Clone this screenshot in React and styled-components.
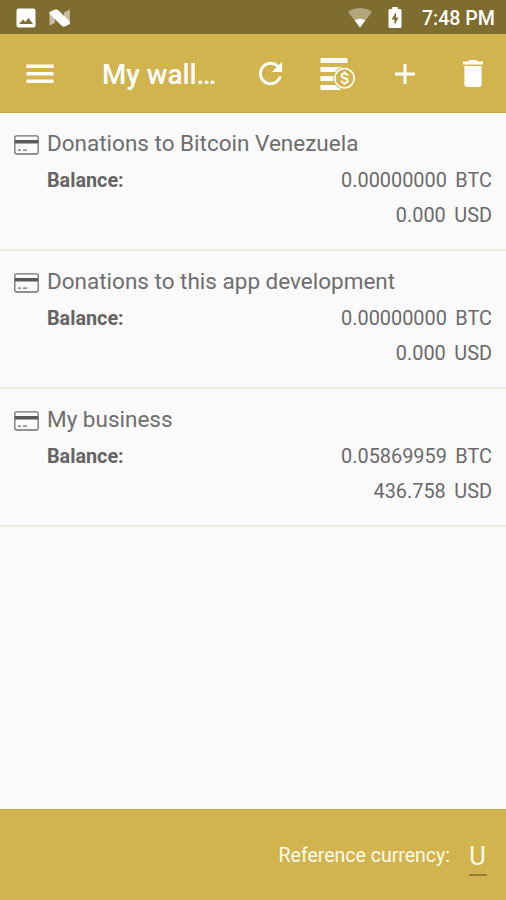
import React from 'react';
import styled, {createGlobalStyle} from 'styled-components';

const GlobalStyle = createGlobalStyle`
  body {
    margin: 0;
    background-color: #fafafa;
    font-family: Roboto, sans-serif;
  }
`;

const Screen = styled.div`
  display: flex;
  flex-direction: column;
  height: 900px;
  overflow: hidden;
`;

const StatusBar = styled.div`
  display: flex;
  justify-content: space-between;
  align-items: center;
  height: 34px;
  padding: 1px 11px 0 16px;
  box-sizing: border-box;
  background-color: #7f6c2f;
  color: white;
`;

const StatusGroup = styled.div`
  display: flex;
  align-items: center;
  gap: ${props => props.$gap}px;
`;

const Clock = styled.span`
  margin-left: 4px;
  padding-top: 2px;
  font-size: 19.6px;
  font-weight: 500;
  line-height: 24px;
`;

const Toolbar = styled.header`
  display: flex;
  align-items: center;
  height: 79px;
  padding: 1px 20px 0 26px;
  box-sizing: border-box;
  background-color: #d2b44e;
  border-bottom: 1px solid #c9a936;
  color: white;
`;

const Title = styled.h1`
  flex: 1;
  margin: 2px 0 0 48px;
  font-size: 27.8px;
  font-weight: 500;
  line-height: 36px;
  white-space: nowrap;
`;

const IconButton = styled.button`
  display: flex;
  align-items: center;
  justify-content: center;
  width: ${props => props.$width}px;
  height: 48px;
  margin: 0 0 0 ${props => props.$left || 0}px;
  padding: 0;
  border: 0;
  background: none;
  color: inherit;
`;

const WalletList = styled.main`
  flex: 1;
`;

const Wallet = styled.section`
  display: flex;
  height: 138px;
  padding: 16px 14px 0;
  box-sizing: border-box;
  border-bottom: 2px solid #eeeee0;
  color: #6a6a6a;

  svg {
    flex: none;
    margin: 6px 8px 0 0;
  }
`;

const WalletBody = styled.div`
  flex: 1;
`;

const WalletName = styled.h2`
  margin: 0;
  font-size: 22.5px;
  font-weight: 400;
  line-height: 28px;
  color: #6e6e6e;
`;

const AmountRow = styled.div`
  display: flex;
  justify-content: space-between;
  height: 35px;
  padding-top: ${props => props.$top || 0}px;
  font-size: 19.9px;
  line-height: 35px;
`;

const Label = styled.span`
  font-weight: 700;
  font-size: 19.8px;
  color: #646464;
`;

const Amount = styled.span`
  margin-left: auto;
  word-spacing: 3.5px;
`;

const Footer = styled.footer`
  display: flex;
  justify-content: flex-end;
  align-items: center;
  height: 91px;
  padding-right: 19px;
  box-sizing: border-box;
  background-color: #d2b44e;
  border-top: 1px solid #cbad42;
  color: #fffbea;
  font-size: 19.5px;
`;

const Currency = styled.span`
  width: 18px;
  margin: 5px 0 0 19px;
  border-bottom: 2px solid #9a7c35;
  font-size: 25.5px;
  line-height: 35px;
  text-indent: -1px;
  text-align: center;
`;

const PictureIcon = () => (
  <svg width="20" height="20" viewBox="0 0 20 20">
    <path fill="currentColor" fillRule="evenodd" d="M2.5 .5h15a2 2 0 0 1 2 2v15a2 2 0 0 1-2 2h-15a2 2 0 0 1-2-2v-15a2 2 0 0 1 2-2ZM3 16h14l-4.5-6-3.2 4-2.2-2.6Z"/>
  </svg>
);

const NougatIcon = () => (
  <svg width="22" height="18" viewBox="0 0 22 18">
    <path fill="#c6bda2" d="M.5 3 6 6v8L.5 16.500ZM15 3.500 20.800 .5v14l-5.800-4Z"/>
    <path fill="currentColor" d="M.5 3 6 .5Q8 0 9.500 1.500L20.800 12.500V15L16 17.600Q14 18 12.500 16.500L.5 4.800Z"/>
  </svg>
);

const WifiIcon = () => (
  <svg width="24" height="20" viewBox="0 0 24 20">
    <path fill="#b2a67e" d="M0 4C7-1.200 17-1.200 24 4L12 19.500Z"/>
    <path fill="currentColor" d="M6.800 12.600c3-2.400 7.400-2.400 10.400 0L12 19.500Z"/>
  </svg>
);

const BatteryIcon = () => (
  <svg width="14" height="21" viewBox="0 0 14 21">
    <path fill="currentColor" d="M4.200 0h5.600v2H12a1.500 1.500 0 0 1 1.500 1.500v16A1.500 1.500 0 0 1 12 21H2a1.500 1.500 0 0 1-1.500-1.500v-16A1.500 1.500 0 0 1 2 2h2.200Z"/>
    <path fill="#7f6c2f" d="M8 5 3.700 12.500h2.800V18l4-7.500H8Z"/>
  </svg>
);

const MenuIcon = () => (
  <svg width="28" height="20" viewBox="0 0 28 20" fill="currentColor">
    <path d="M.5 .5h27v3.400H.5ZM.5 8h27v3.400H.5ZM.5 15.500h27v3.400H.5Z"/>
  </svg>
);

const RefreshIcon = () => (
  <svg width="35" height="35" viewBox="0 0 24 24" fill="currentColor">
    <path d="M17.650 6.350A7.958 7.958 0 0 0 12 4a8 8 0 1 0 7.730 10h-2.080A6 6 0 1 1 12 6c1.660 0 3.140.690 4.220 1.780L13 11h7V4Z"/>
  </svg>
);

const CoinsIcon = () => (
  <svg width="36" height="34" viewBox="0 0 36 34">
    <path fill="currentColor" d="M.5 1h27v5H.5ZM.5 10h27v5H.5ZM.5 19h16v5H.5ZM.5 28h20v5H.5Z"/>
    <circle cx="24.500" cy="21.200" r="11.300" fill="#d2b44e"/>
    <circle cx="24.500" cy="21.200" r="9.700" fill="none" stroke="currentColor" strokeWidth="1.700"/>
    <path fill="none" stroke="currentColor" strokeWidth="2" d="M27.700 18.700c-.3-1.600-1.600-2.100-3.100-2.100-1.700 0-3 .8-3 2.200 0 3.200 6.200 1.600 6.200 4.800 0 1.500-1.400 2.300-3.200 2.300-1.800 0-3.100-.8-3.300-2.400M24.600 14.500v2.200M24.600 25.700v2.300"/>
  </svg>
);

const PlusIcon = () => (
  <svg width="20" height="20" viewBox="0 0 20 20" fill="currentColor">
    <path d="M8.500 0h3v8.500H20v3h-8.500V20h-3v-8.500H0v-3h8.500Z"/>
  </svg>
);

const TrashIcon = () => (
  <svg width="20" height="27" viewBox="0 0 20 27" fill="currentColor">
    <path d="M0 1.500h5.200L6.500 0h7l1.300 1.500H20v3H0ZM1.400 6h17.200v18a3 3 0 0 1-3 3H4.400a3 3 0 0 1-3-3Z"/>
  </svg>
);

const CardIcon = () => (
  <svg width="25" height="20" viewBox="0 0 25 20">
    <rect x=".8" y=".8" width="23.400" height="18.200" rx="1.800" fill="none" stroke="#707070" strokeWidth="1.300"/>
    <path fill="#595959" d="M1 5h23v3.500H1Z"/>
    <path stroke="#707070" strokeWidth="1.200" d="M4 15.200h3M9 15.200h4"/>
  </svg>
);

const wallets = [
  {name: 'Donations to Bitcoin Venezuela', btc: '0.00000000', usd: '0.000'},
  {name: 'Donations to this app development', btc: '0.00000000', usd: '0.000'},
  {name: 'My business', btc: '0.05869959', usd: '436.758'},
];

const App = () => (
  <Screen>
    <GlobalStyle/>
    <StatusBar>
      <StatusGroup $gap={13}>
        <PictureIcon/>
        <NougatIcon/>
      </StatusGroup>
      <StatusGroup $gap={16}>
        <WifiIcon/>
        <BatteryIcon/>
        <Clock>7:48 PM</Clock>
      </StatusGroup>
    </StatusBar>
    <Toolbar>
      <IconButton $width={28} aria-label="Menu"><MenuIcon/></IconButton>
      <Title>My wall…</Title>
      <IconButton $width={36} aria-label="Refresh"><RefreshIcon/></IconButton>
      <IconButton $width={36} $left={32} aria-label="Currencies"><CoinsIcon/></IconButton>
      <IconButton $width={20} $left={39} aria-label="Add"><PlusIcon/></IconButton>
      <IconButton $width={26} $left={45} aria-label="Delete"><TrashIcon/></IconButton>
    </Toolbar>
    <WalletList>
      {wallets.map(wallet => (
        <Wallet key={wallet.name}>
          <CardIcon/>
          <WalletBody>
            <WalletName>{wallet.name}</WalletName>
            <AmountRow $top={6}>
              <Label>Balance:</Label>
              <Amount>{wallet.btc} BTC</Amount>
            </AmountRow>
            <AmountRow>
              <Amount>{wallet.usd} USD</Amount>
            </AmountRow>
          </WalletBody>
        </Wallet>
      ))}
    </WalletList>
    <Footer>
      <span>Reference currency:</span>
      <Currency>U</Currency>
    </Footer>
  </Screen>
);

export default App;
